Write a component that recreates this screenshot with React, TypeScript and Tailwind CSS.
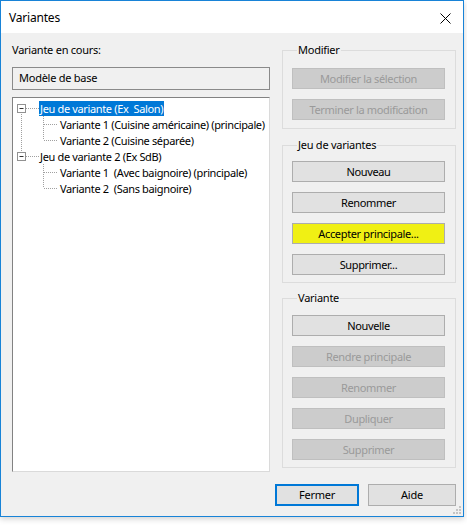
import React from "react";

const FONT = { fontFamily: '"Noto Sans", "Liberation Sans", sans-serif' };

function Btn({
  label,
  disabled,
  yellow,
}: {
  label: string;
  disabled?: boolean;
  yellow?: boolean;
}) {
  const cls = disabled
    ? "bg-[#cccccc] border-[#bfbfbf] text-[#9a9a9a]"
    : yellow
    ? "bg-[#f0f014] border-[#adadad] text-black"
    : "bg-[#e1e1e1] border-[#adadad] text-black";
  return (
    <div
      className={`h-[21px] w-[153px] border flex items-center justify-center text-[11px] tracking-[-0.35px] leading-none ${cls}`}
    >
      {label}
    </div>
  );
}

function Group({
  title,
  children,
  className,
  innerClass,
}: {
  title: string;
  children: React.ReactNode;
  className?: string;
  innerClass?: string;
}) {
  return (
    <fieldset
      className={`border border-[#dcdcdc] px-[9px] ${className ?? ""}`}
    >
      <legend className="ml-[5px] px-[1px] text-[11px] tracking-[-0.25px] leading-[16px] text-black">
        {title}
      </legend>
      <div className={`flex flex-col gap-[10px] ${innerClass ?? ""}`}>{children}</div>
    </fieldset>
  );
}

function TreeLines() {
  const dot = "#a0a0a0";
  return (
    <svg
      className="absolute left-0 top-0"
      width="60"
      height="100"
      viewBox="0 0 60 100"
    >
      <line x1="8.5" y1="14" x2="8.5" y2="54" stroke={dot} strokeDasharray="1 1" />
      <line x1="13" y1="10.5" x2="26" y2="10.5" stroke={dot} strokeDasharray="1 1" />
      <line x1="13" y1="58.5" x2="26" y2="58.5" stroke={dot} strokeDasharray="1 1" />
      <line x1="30.5" y1="18" x2="30.5" y2="42" stroke={dot} strokeDasharray="1 1" />
      <line x1="31" y1="26.5" x2="45" y2="26.5" stroke={dot} strokeDasharray="1 1" />
      <line x1="31" y1="42.5" x2="45" y2="42.5" stroke={dot} strokeDasharray="1 1" />
      <line x1="30.5" y1="66" x2="30.5" y2="90" stroke={dot} strokeDasharray="1 1" />
      <line x1="31" y1="74.5" x2="45" y2="74.5" stroke={dot} strokeDasharray="1 1" />
      <line x1="31" y1="90.5" x2="45" y2="90.5" stroke={dot} strokeDasharray="1 1" />
      <rect x="4.5" y="6.5" width="8" height="8" fill="#fff" stroke="#919191" />
      <line x1="6.5" y1="10.5" x2="10.5" y2="10.5" stroke="#333" />
      <rect x="4.5" y="54.5" width="8" height="8" fill="#fff" stroke="#919191" />
      <line x1="6.5" y1="58.5" x2="10.5" y2="58.5" stroke="#333" />
    </svg>
  );
}

function TreeRow({
  text,
  level,
  selected,
}: {
  text: string;
  level: 0 | 1;
  selected?: boolean;
}) {
  return (
    <div
      className={`h-[16px] flex items-center ${
        level === 0 ? "pl-[26px]" : "pl-[46px]"
      }`}
    >
      <span
        className={`h-[15px] px-[1px] text-[11px] leading-[15px] tracking-[-0.35px] whitespace-pre ${
          selected ? "bg-[#0078d7] text-white" : "text-black"
        }`}
      >
        {text}
      </span>
    </div>
  );
}

export default function App() {
  return (
    <div className="w-[467px] h-[525px] bg-white" style={FONT}>
      <div className="relative w-[464px] h-[517px] border border-[#1883d7] bg-[#f0f0f0] flex flex-col shadow-[0_2px_6px_rgba(0,0,0,0.18)]">
        {/* title bar */}
        <div className="h-[32px] bg-white flex items-center justify-between pl-[8px] pr-[6px] shrink-0">
          <span className="text-[12px] tracking-[-0.2px] text-black pt-[2px]">Variantes</span>
          <div className="w-[20px] h-[20px] flex items-center justify-center mr-[2px] mt-[2px]">
            <svg width="11" height="11" viewBox="0 0 11 11">
              <line x1="0.5" y1="0.5" x2="10.5" y2="10.5" stroke="#000" strokeWidth="1" />
              <line x1="10.5" y1="0.5" x2="0.5" y2="10.5" stroke="#000" strokeWidth="1" />
            </svg>
          </div>
        </div>

        {/* body */}
        <div className="flex-1 flex flex-col pl-[11px]">
          <div className="flex gap-[12px] pt-[9px]">
            {/* left column */}
            <div className="w-[258px] flex flex-col">
              <div className="h-[16px] leading-[16px] text-[11px] tracking-[-0.25px] text-black">
                Variante en cours:
              </div>
              <div className="mt-[9px] h-[23px] border border-[#8a8a8a] flex items-center pl-[6px] text-[11px] tracking-[-0.25px] text-black">
                Modèle de base
              </div>
              <div className="mt-[7px] h-[375px] bg-white border-t border-l border-t-[#828282] border-l-[#828282] border-r border-b border-r-[#dadada] border-b-[#dadada]">
                <div className="relative pt-[2px]">
                  <TreeLines />
                  <div className="relative flex flex-col">
                    <TreeRow text="Jeu de variante (Ex  Salon)" level={0} selected />
                    <TreeRow text="Variante 1 (Cuisine américaine) (principale)" level={1} />
                    <TreeRow text="Variante 2 (Cuisine séparée)" level={1} />
                    <TreeRow text="Jeu de variante 2 (Ex SdB)" level={0} />
                    <TreeRow text="Variante 1  (Avec baignoire) (principale)" level={1} />
                    <TreeRow text="Variante 2  (Sans baignoire)" level={1} />
                  </div>
                </div>
              </div>
            </div>

            {/* right column */}
            <div className="w-[174px] flex flex-col">
              <Group title="Modifier" className="pb-[8px]" innerClass="mt-[10px]">
                <Btn label="Modifier la sélection" disabled />
                <Btn label="Terminer la modification" disabled />
              </Group>
              <Group title="Jeu de variantes" className="mt-[8px] pb-[7px]" innerClass="mt-[8px]">
                <Btn label="Nouveau" />
                <Btn label="Renommer" />
                <Btn label="Accepter principale..." yellow />
                <Btn label="Supprimer..." />
              </Group>
              <Group title="Variante" className="mt-[7px] pb-[7px]" innerClass="mt-[9px]">
                <Btn label="Nouvelle" />
                <Btn label="Rendre principale" disabled />
                <Btn label="Renommer" disabled />
                <Btn label="Dupliquer" disabled />
                <Btn label="Supprimer" disabled />
              </Group>
            </div>
          </div>

          {/* footer */}
          <div className="flex justify-end gap-[9px] pr-[7px] mt-[12px]">
            <div className="h-[22px] w-[84px] border-2 border-[#0078d7] bg-[#e1e1e1] flex items-center justify-center text-[11px] tracking-[-0.25px] text-black">
              Fermer
            </div>
            <div className="h-[22px] w-[88px] border border-[#adadad] bg-[#e1e1e1] flex items-center justify-center text-[11px] tracking-[-0.25px] text-black">
              Aide
            </div>
          </div>
        </div>

        {/* size grip */}
        <svg
          className="absolute right-[1px] bottom-[1px]"
          width="10"
          height="10"
          viewBox="0 0 10 10"
        >
          <rect x="7" y="1" width="2" height="2" fill="#c4c4c4" />
          <rect x="4" y="4" width="2" height="2" fill="#c4c4c4" />
          <rect x="7" y="4" width="2" height="2" fill="#c4c4c4" />
          <rect x="1" y="7" width="2" height="2" fill="#c4c4c4" />
          <rect x="4" y="7" width="2" height="2" fill="#c4c4c4" />
          <rect x="7" y="7" width="2" height="2" fill="#c4c4c4" />
        </svg>
      </div>
    </div>
  );
}
